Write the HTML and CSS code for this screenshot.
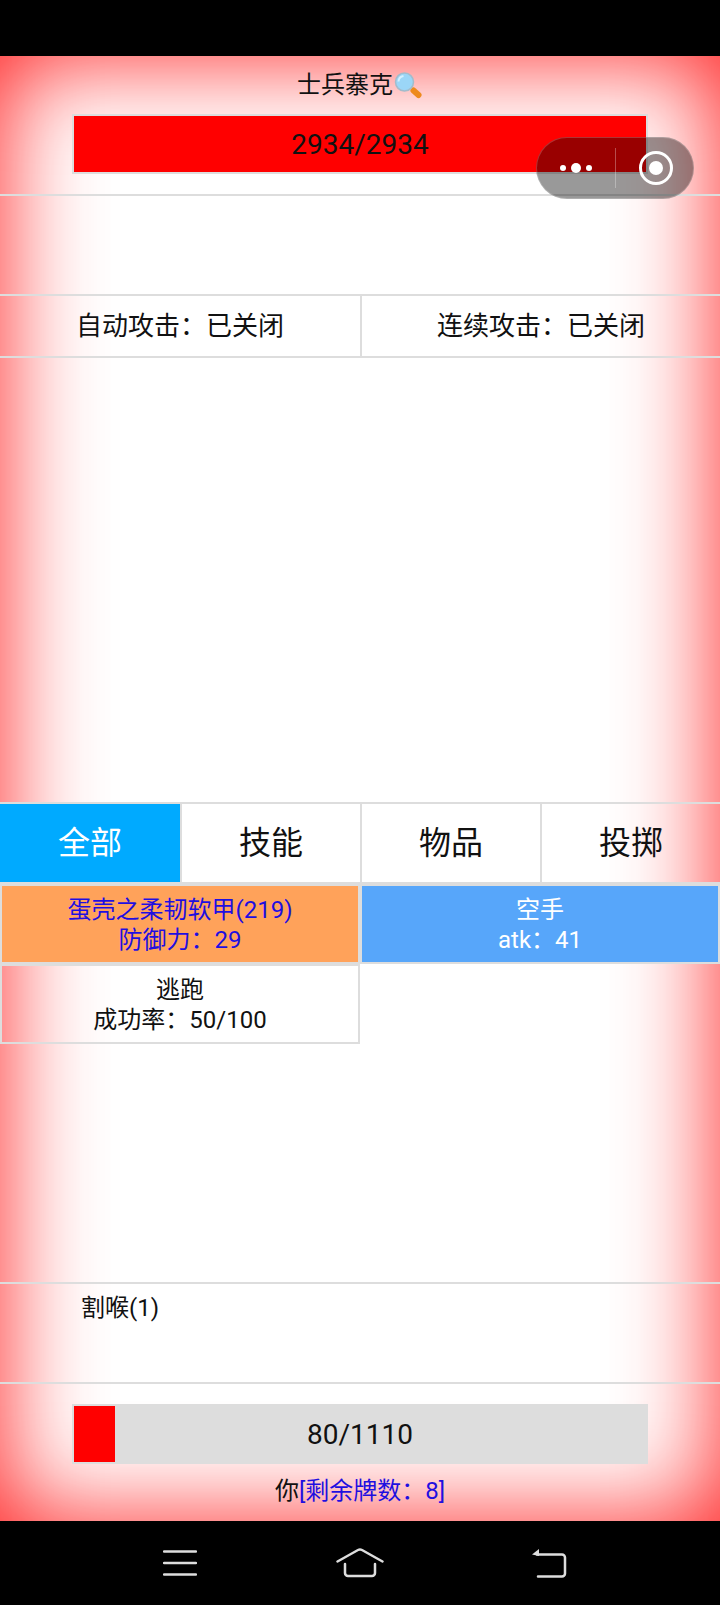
FILE: index.html
```html
<!DOCTYPE html>
<html lang="zh">
<head>
<meta charset="utf-8">
<title>士兵寨克</title>
<link rel="stylesheet" href="styles.css">
</head>
<body>
<div class="status-bar"></div>
<main class="page">
  <header class="enemy">
    <div class="name">士兵寨克<svg class="magnifier" width="30" height="30" viewBox="0 0 30 30"><path class="handle" d="M20.500 20.500 25.500 25"/><circle class="lens" cx="11.500" cy="12" r="9"/><path class="shine" d="M5.500 11.500a6 6 0 0 1 5-5.500"/></svg></div>
    <div class="bar bar-full"><div class="fill fill-full"></div><span class="bar-text">2934/2934</span></div>
  </header>
  <section class="effects"></section>
  <section class="toggles">
    <div class="toggle">自动攻击：已关闭</div>
    <div class="toggle">连续攻击：已关闭</div>
  </section>
  <section class="log"></section>
  <nav class="tabs">
    <div class="tab active">全部</div>
    <div class="tab">技能</div>
    <div class="tab">物品</div>
    <div class="tab">投掷</div>
  </nav>
  <section class="cards">
    <div class="card armor">蛋壳之柔韧软甲(219)<br>防御力：29</div>
    <div class="card weapon">空手<br>atk：41</div>
    <div class="card plain">逃跑<br>成功率：50/100</div>
  </section>
  <section class="skills"><span class="skill">割喉(1)</span></section>
  <footer class="player">
    <div class="bar bar-player"><div class="fill" style="width:7.2%"></div><span class="bar-text">80/1110</span></div>
    <div class="you">你<span class="deck">[剩余牌数：8]</span></div>
  </footer>
</main>
<div class="nav-bar">
  <svg class="nav-icon" width="34" height="30" viewBox="0 0 34 30"><path d="M1 3.500h32M1 15h32M1 26.500h32"/></svg>
  <svg class="nav-icon" width="48" height="30" viewBox="0 0 48 30"><path d="M1.500 13.500 22 2a4 4 0 0 1 4 0L46.500 13.500M9 16v9a3 3 0 0 0 3 3h24a3 3 0 0 0 3-3v-9"/></svg>
  <svg class="nav-icon" width="36" height="30" viewBox="0 0 36 30"><path d="M6 6.500h25a3 3 0 0 1 3 3v16a3 3 0 0 1-3 3H7"/><path class="arrow" d="M1 6.500 8 1v7z"/></svg>
</div>
<div class="capsule">
  <div class="capsule-part"><i class="dot"></i><i class="dot big"></i><i class="dot"></i></div>
  <div class="capsule-part capsule-close"><span class="ring"></span></div>
</div>
</body>
</html>
```
FILE: styles.css
```css
* { box-sizing: border-box; }
html, body { margin: 0; padding: 0; }
body {
  width: 720px;
  height: 1605px;
  position: relative;
  display: flex;
  flex-direction: column;
  font-family: Roboto, "Noto Sans CJK SC", sans-serif;
  font-size: 24px;
  line-height: 30px;
  color: #111;
  background: #000;
  overflow: hidden;
}
.status-bar { height: 56px; flex: none; background: #000; }
.page {
  height: 1465px;
  flex: none;
  display: flex;
  flex-direction: column;
  background: #fff;
  box-shadow: inset 0 0 100px rgba(255, 0, 0, .9);
}
.enemy { height: 138px; flex: none; }
.name {
  height: 58px;
  padding-top: 14px;
  display: flex;
  justify-content: center;
  align-items: flex-start;
}
.magnifier { flex: none; }
.lens { fill: #9bd6f7; stroke: #a3bccb; stroke-width: 1.500; }
.shine { fill: none; stroke: #d5f0fd; stroke-width: 2; }
.handle { fill: none; stroke: #ee8a1d; stroke-width: 6; stroke-linecap: round; }
.bar {
  position: relative;
  margin: 0 72px;
  border: 2px solid #ddd;
  font-size: 28px;
  display: flex;
  width: 576px;
}
.bar-full { height: 60px; }
.bar-player { height: 60px; background: #ddd; }
.fill { background: #f00; height: 100%; }
.fill-full { width: 100%; }
.bar-text {
  position: absolute;
  inset: 0;
  padding-top: 2px;
  display: flex;
  align-items: center;
  justify-content: center;
}
.effects { height: 100px; flex: none; border-top: 2px solid #ddd; }
.toggles {
  height: 64px;
  flex: none;
  display: grid;
  grid-template-columns: 360px 360px;
  border-top: 2px solid #ddd;
  border-bottom: 2px solid #ddd;
}
.toggle {
  display: flex;
  align-items: center;
  justify-content: center;
  font-size: 26px;
}
.toggle + .toggle { border-left: 2px solid #ddd; }
.log { height: 444px; flex: none; }
.tabs {
  height: 82px;
  flex: none;
  display: grid;
  grid-template-columns: repeat(4, 180px);
  border-top: 2px solid #ddd;
  border-bottom: 2px solid #ddd;
}
.tab {
  display: flex;
  align-items: center;
  justify-content: center;
  font-size: 32px;
  border-left: 2px solid #ddd;
}
.tab:first-child { border-left: 0; }
.tab.active { background: #00aaff; color: #fff; }
.cards {
  height: 398px;
  flex: none;
  display: grid;
  grid-template-columns: 360px 360px;
  grid-auto-rows: 80px;
  align-content: start;
}
.card {
  border: 2px solid #ddd;
  text-align: center;
  padding-top: 9px;
}
.armor { background: #ffa25a; color: #1f0fe0; }
.weapon { background: #57a6fa; color: #fff; }
.skills {
  height: 100px;
  flex: none;
  padding: 9px 0 0 81px;
  border-top: 2px solid #ddd;
}
.skill { display: block; }
.player { flex: 1; border-top: 2px solid #ddd; padding-top: 20px; }
.you { text-align: center; margin-top: 12px; }
.deck { color: #1f0fe0; }
.nav-bar {
  flex: 1;
  background: #000;
  display: flex;
  align-items: center;
  padding-left: 163px;
}
.nav-icon { display: block; flex: none; fill: none; stroke: #ddd; stroke-width: 2.500; stroke-linecap: round; }
.nav-icon + .nav-icon { margin-left: 139px; }
.nav-icon + .nav-icon + .nav-icon { margin-left: 147px; }
.arrow { fill: #ddd; stroke: none; }
.capsule {
  position: absolute;
  left: 536px;
  top: 137px;
  width: 158px;
  height: 62px;
  border-radius: 31px;
  background: rgba(0, 0, 0, .4);
  border: 1px solid rgba(255, 255, 255, .2);
  display: grid;
  grid-template-columns: 78px 1fr;
}
.capsule-part { display: flex; align-items: center; justify-content: center; gap: 5px; }
.capsule-close { position: relative; padding-left: 4px; }
.capsule-close::before {
  content: "";
  position: absolute;
  left: 0;
  top: 10px;
  bottom: 10px;
  width: 1px;
  background: rgba(255, 255, 255, .3);
}
.dot { width: 6px; height: 6px; border-radius: 50%; background: #fff; }
.dot.big { width: 10px; height: 10px; }
.ring {
  width: 34px;
  height: 34px;
  border: 3px solid #fff;
  border-radius: 50%;
  display: flex;
  align-items: center;
  justify-content: center;
}
.ring::before { content: ""; width: 14px; height: 14px; border-radius: 50%; background: #fff; }
```
